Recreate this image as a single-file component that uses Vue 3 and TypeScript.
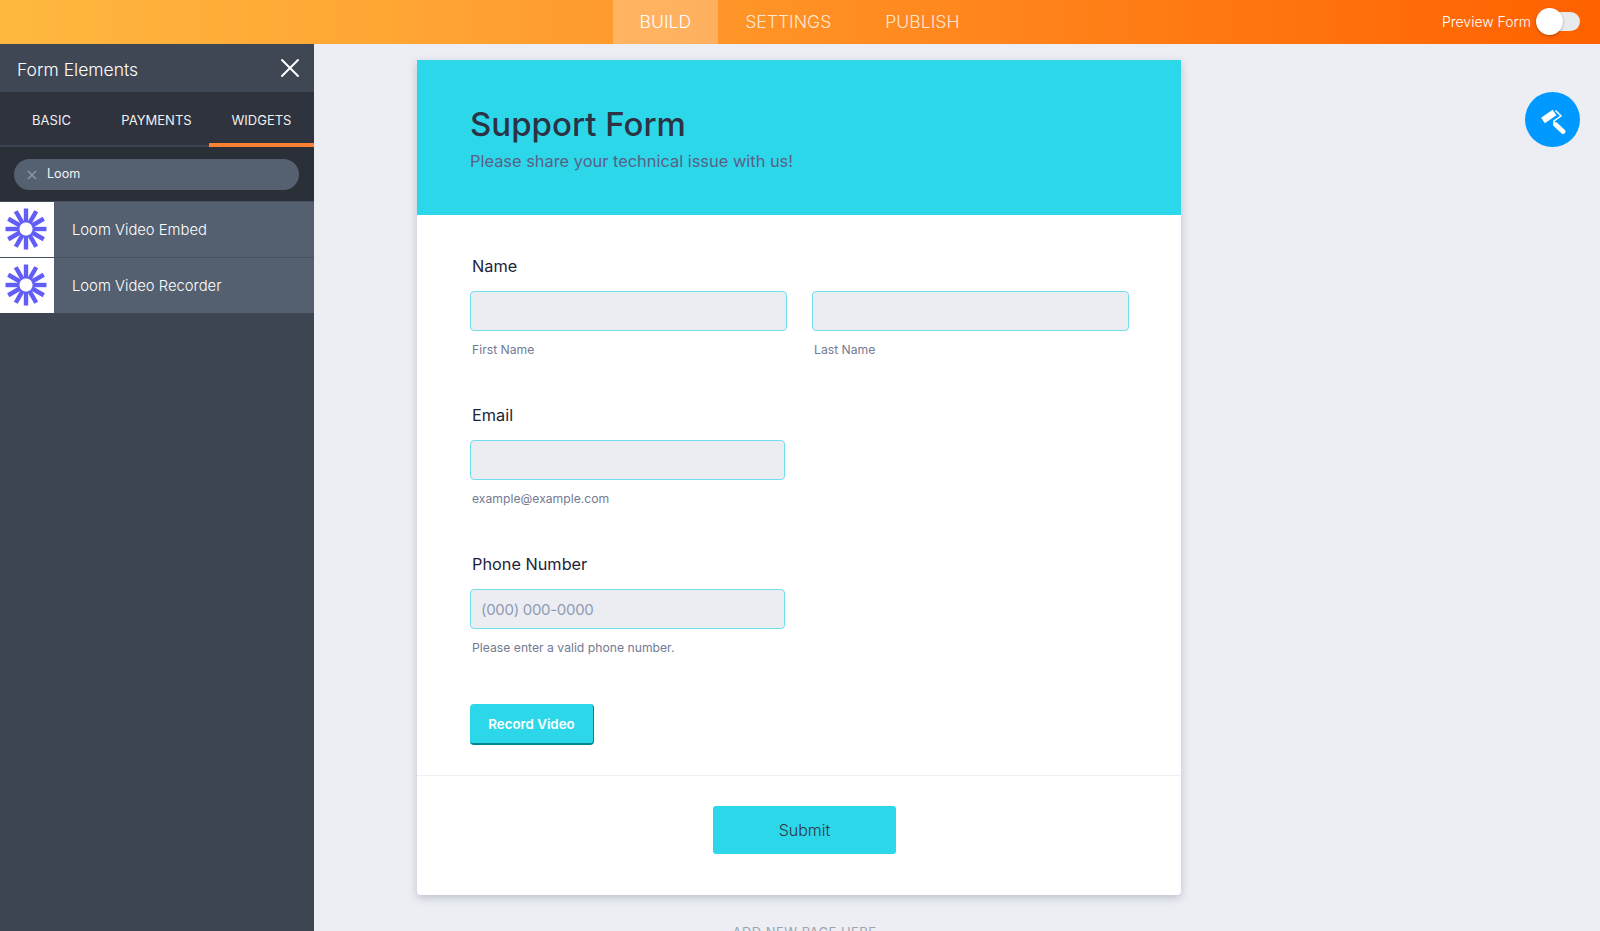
<script setup lang="ts">
const navTabs = ["Build", "Settings", "Publish"];
const sideTabs = ["Basic", "Payments", "Widgets"];
const widgets = ["Loom Video Embed", "Loom Video Recorder"];
const rays = Array.from({ length: 12 }, (_, i) => i * 30);
</script>

<template>
	<div class="page">
		<header class="topbar">
			<nav class="nav">
				<a v-for="(tab, i) in navTabs" :key="tab" class="nav-tab" :class="{ active: i === 0 }">{{ tab }}</a>
			</nav>
			<div class="preview">
				<span>Preview Form</span>
				<span class="toggle"><span class="knob"></span></span>
			</div>
		</header>

		<div class="content">
			<aside class="sidebar">
				<div class="side-head">
					<span>Form Elements</span>
					<svg width="20" height="20" viewBox="0 0 20 20" class="close">
						<path d="M2 2 18 18M18 2 2 18" stroke="#fff" stroke-width="2" stroke-linecap="round" />
					</svg>
				</div>
				<div class="side-tabs">
					<div v-for="(tab, i) in sideTabs" :key="tab" class="side-tab" :class="{ active: i === 2 }">{{ tab }}</div>
				</div>
				<div class="search-wrap">
					<div class="search">
						<svg width="10" height="10" viewBox="0 0 10 10">
							<path d="M1 1 9 9M9 1 1 9" stroke="#8f98a6" stroke-width="1.4" />
						</svg>
						<span>Loom</span>
					</div>
				</div>
				<div v-for="name in widgets" :key="name" class="widget">
					<div class="widget-icon">
						<svg width="42" height="42" viewBox="-21 -21 42 42">
							<rect v-for="deg in rays" :key="deg" x="-2.2" y="-20.5" width="4.4" height="14" fill="#625df5"
								:transform="`rotate(${deg})`" />
						</svg>
					</div>
					<span class="widget-name">{{ name }}</span>
				</div>
			</aside>

			<main class="main">
				<div class="card">
					<div class="banner">
						<h1>Support Form</h1>
						<p>Please share your technical issue with us!</p>
					</div>

					<div class="fields">
						<div class="field">
							<label>Name</label>
							<div class="row">
								<div class="col">
									<input class="wide" type="text" />
									<small>First Name</small>
								</div>
								<div class="col">
									<input class="wide" type="text" />
									<small>Last Name</small>
								</div>
							</div>
						</div>
						<div class="field">
							<label>Email</label>
							<input type="text" />
							<small>example@example.com</small>
						</div>
						<div class="field">
							<label>Phone Number</label>
							<input type="text" placeholder="(000) 000-0000" />
							<small>Please enter a valid phone number.</small>
						</div>
						<button class="record">Record Video</button>
					</div>

					<div class="actions">
						<button class="submit">Submit</button>
					</div>
				</div>
				<div class="add-page">ADD NEW PAGE HERE</div>

				<button class="fab" aria-label="Form designer">
					<svg width="28" height="28" viewBox="0 0 28 28" fill="none" stroke="#fff">
						<path d="M4 14.500 15.500 6.500" stroke-width="6.600" stroke-linejoin="round" />
						<path d="M16.500 4.500 22 10 15 15V17.500" stroke-width="1.500" />
						<path d="M16.500 18.500 24 25.500" stroke-width="4.800" stroke-linecap="round" />
					</svg>
				</button>
			</main>
		</div>
	</div>
</template>

<style>
html,
body {
	margin: 0;
	background: #eceef3;
}
</style>

<style scoped>
.page {
	height: 931px;
	overflow: hidden;
	display: flex;
	flex-direction: column;
	font-family: Inter, "Liberation Sans", sans-serif;
}

.topbar {
	height: 44px;
	flex: none;
	position: relative;
	display: flex;
	justify-content: center;
	background: linear-gradient(90deg, #ffb83f 0%, #ff9a2c 40%, #ff6100 100%);
}

.nav {
	display: flex;
	margin-right: 1px;
}

.nav-tab {
	display: flex;
	align-items: center;
	padding: 0 27px 2px;
	font-size: 17.6px;
	font-weight: 300;
	text-transform: uppercase;
	color: rgba(255, 255, 255, 0.8);
}

.nav-tab.active {
	color: #fff;
	background: rgba(255, 255, 255, 0.25);
}

.preview {
	position: absolute;
	right: 20px;
	top: 0;
	height: 43px;
	display: flex;
	align-items: center;
	gap: 6px;
	color: #fff;
	font-size: 14px;
	font-weight: 300;
}

.toggle {
	position: relative;
	width: 43px;
	height: 19px;
	border-radius: 10px;
	background: #e8ebec;
}

.knob {
	position: absolute;
	left: -1px;
	top: -4px;
	width: 27px;
	height: 27px;
	border-radius: 50%;
	background: #fff;
	box-shadow: 0 1px 3px rgba(0, 0, 0, 0.3);
}

.content {
	flex: 1;
	display: flex;
	min-height: 0;
}

.sidebar {
	width: 314px;
	flex: none;
	background: #3e4552;
	color: #fff;
}

.side-head {
	height: 48px;
	display: flex;
	align-items: center;
	justify-content: space-between;
	padding: 2px 14px 0 17px;
	box-sizing: border-box;
	font-size: 17.5px;
	font-weight: 300;
	background: #3f4654;
}

.close {
	display: block;
	margin-top: -2px;
}

.side-tabs {
	height: 55px;
	box-sizing: border-box;
	display: flex;
	background: #2f333d;
	border-bottom: 2px solid #3e4552;
}

.side-tab {
	flex: 1;
	display: flex;
	align-items: center;
	justify-content: center;
	padding-top: 2px;
	font-size: 13px;
	text-transform: uppercase;
	color: #eef0f3;
}

.side-tab:first-child {
	margin-left: -1px;
}

.side-tab.active {
	border-bottom: 4px solid #ff8033;
	margin-bottom: -2px;
	padding-top: 4px;
}

.search-wrap {
	height: 54px;
	box-sizing: border-box;
	padding: 12px 15px 11px 14px;
	background: #2b2f38;
}

.search {
	height: 31px;
	display: flex;
	align-items: center;
	gap: 10px;
	padding: 0 0 2px 13px;
	box-sizing: border-box;
	border-radius: 16px;
	background: #556070;
	font-size: 12.6px;
	color: #f2f3f5;
}

.search svg {
	margin-top: 2px;
}

.widget {
	height: 56px;
	box-sizing: border-box;
	display: flex;
	background: #545f6f;
	border-top: 1px solid #47505e;
}

.widget-icon {
	width: 54px;
	flex: none;
	display: flex;
	align-items: center;
	justify-content: center;
	padding: 0 3px 2px 0;
	box-sizing: border-box;
	background: #fff;
}

.widget-name {
	display: flex;
	align-items: center;
	padding-left: 18px;
	font-size: 14.8px;
	font-weight: 300;
}

.main {
	flex: 1;
	position: relative;
	padding: 16px 0 0 103px;
	background: #eceef3;
}

.card {
	width: 764px;
	background: #fff;
	border-radius: 0 0 4px 4px;
	box-shadow: 0 3px 8px rgba(70, 80, 110, 0.28);
}

.banner {
	height: 155px;
	box-sizing: border-box;
	padding: 44px 53px 0;
	background: #2dd7ea;
}

.banner h1 {
	margin: 0;
	font-size: 33px;
	line-height: 40px;
	font-weight: 500;
	color: #2c3345;
}

.banner p {
	margin: 5px 0 0;
	font-size: 16.4px;
	line-height: 24px;
	color: #5a5f85;
}

.fields {
	padding: 41px 53px 30px;
	border-bottom: 1px solid #eeeef4;
}

.field {
	margin-bottom: 47px;
	display: flex;
	flex-direction: column;
	align-items: flex-start;
}

.field label {
	margin: 0 0 15px 2px;
	font-size: 16.3px;
	line-height: 20px;
	color: #1d2439;
}

.field input {
	width: 315px;
	height: 40px;
	box-sizing: border-box;
	padding: 0 10px;
	border: 1px solid #70e0ee;
	border-radius: 4px;
	background: #ebedf2;
	font: 15px Inter, "Liberation Sans", sans-serif;
	letter-spacing: -0.3px;
}

.field input.wide {
	width: 317px;
}

.field input::placeholder {
	color: #8f9cb2;
}

.field small {
	display: block;
	margin: 11px 0 0 2px;
	font-size: 12.2px;
	line-height: 16px;
	color: #737a93;
}

.row {
	display: flex;
	gap: 25px;
}

.record {
	display: block;
	width: 124px;
	height: 41px;
	margin-top: 48px;
	padding: 0;
	border: 0;
	border-bottom: 2px solid #008694;
	border-right: 1px solid #008694;
	border-radius: 4px;
	background: #2dd7ea;
	color: #fff;
	font: 600 13.300px Inter, "Liberation Sans", sans-serif;
}

.actions {
	height: 119px;
	box-sizing: border-box;
	padding-top: 30px;
	display: flex;
	justify-content: center;
}

.submit {
	width: 183px;
	height: 48px;
	margin-left: 11px;
	padding: 0;
	border: 0;
	border-radius: 3px;
	background: #2dd7ea;
	color: #2c3345;
	font: 300 16px Inter, "Liberation Sans", sans-serif;
}

.add-page {
	width: 764px;
	margin-top: 29px;
	padding-left: 11px;
	box-sizing: border-box;
	text-align: center;
	font-size: 13px;
	letter-spacing: 0.45px;
	color: #9da3b1;
}

.fab {
	position: absolute;
	top: 48px;
	right: 20px;
	width: 55px;
	height: 55px;
	padding: 0;
	border: 0;
	border-radius: 50%;
	background: #0099ff;
	display: flex;
	align-items: center;
	justify-content: center;
}
</style>
